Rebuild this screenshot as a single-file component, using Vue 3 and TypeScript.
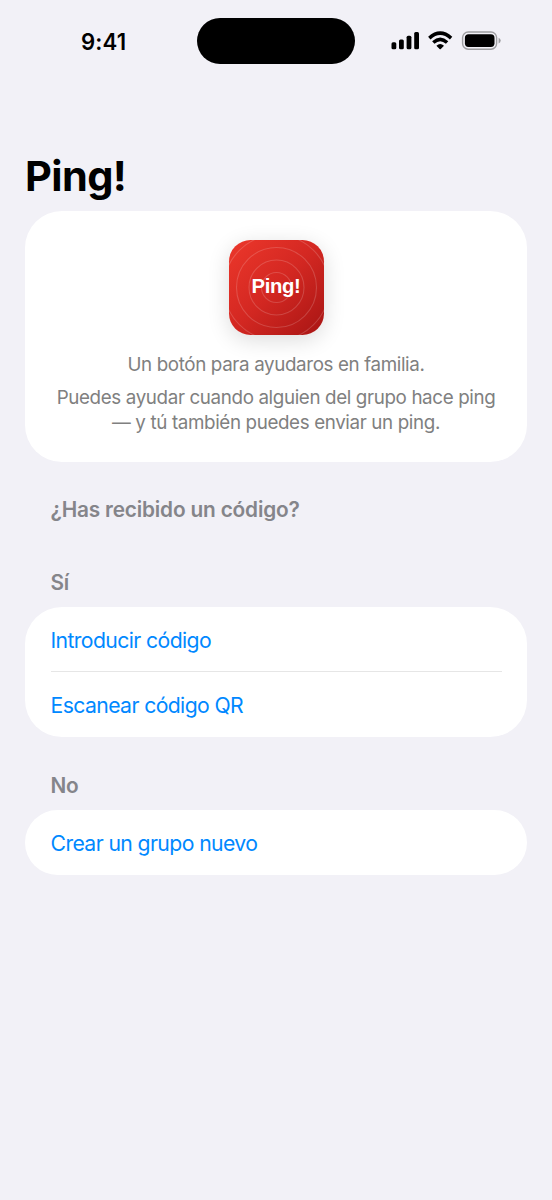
<script setup lang="ts">
interface Section {
  title: string
  actions: string[]
}

const time = '9:41'
const rings: number[] = [15, 27.5, 40, 52.5]
const sections: Section[] = [
  { title: 'Sí', actions: ['Introducir código', 'Escanear código QR'] },
  { title: 'No', actions: ['Crear un grupo nuevo'] },
]
</script>

<template>
  <div class="screen">
    <header class="status">
      <span class="time">{{ time }}</span>
      <div class="island"></div>
      <svg class="indicators" width="112" height="22" viewBox="0 0 112 22">
        <rect x="1.5" y="12.3" width="4.8" height="6.9" rx="1.5" />
        <rect x="9" y="9.4" width="4.8" height="9.8" rx="1.5" />
        <rect x="16.6" y="5.7" width="4.8" height="13.5" rx="1.5" />
        <rect x="24.2" y="2" width="4.8" height="17.2" rx="1.5" />
        <g fill="none" stroke="#000" stroke-width="3.5">
          <path d="M39.3 8.1 Q50.2 -1.7 61.1 8.1" />
          <path d="M43.3 12.5 Q50.2 6.3 57.1 12.5" />
        </g>
        <path d="M46.4 15.8 Q50.2 12.1 54 15.8 L50.8 18.9 Q50.2 19.5 49.6 18.9 Z" />
        <rect x="72.6" y="2" width="34" height="17.2" rx="5.6" fill="none" stroke="#9d9da0" stroke-width="1.4" />
        <rect x="74.9" y="4.3" width="29.6" height="12.6" rx="3.6" />
        <path d="M108.6 7.8 Q110.7 8.7 110.7 10.6 Q110.7 12.5 108.6 13.4 Z" fill="#9d9da0" />
      </svg>
    </header>

    <main>
      <h1>Ping!</h1>
      <section class="card intro">
        <div class="logo">
          <svg class="rings" width="95" height="95" viewBox="0 0 95 95">
            <circle v-for="r in rings" :key="r" cx="47.5" cy="47.5" :r="r" />
          </svg>
          <span class="wordmark">Ping!</span>
        </div>
        <p class="lead">Un botón para ayudaros en familia.</p>
        <p class="detail">Puedes ayudar cuando alguien del grupo hace ping<br />— y tú también puedes enviar un ping.</p>
      </section>

      <h2 class="question">¿Has recibido un código?</h2>

      <section v-for="section in sections" :key="section.title" class="group">
        <h2>{{ section.title }}</h2>
        <div class="card">
          <button v-for="action in section.actions" :key="action" type="button">
            <span>{{ action }}</span>
          </button>
        </div>
      </section>
    </main>
  </div>
</template>

<style>
body {
  background: #f2f1f7;
}
</style>

<style scoped>
.screen {
  box-sizing: border-box;
  width: 552px;
  height: 1200px;
  overflow: hidden;
  background: #f2f1f7;
  font-family: Inter, "Liberation Sans", sans-serif;
  color: #000;
}

.status {
  display: flex;
  align-items: center;
  height: 46px;
  padding: 18px 50px 0 81px;
}

.time {
  width: 116px;
  font-size: 22.2px;
  font-weight: 600;
  line-height: 47px;
  letter-spacing: 0.15px;
}

.island {
  width: 158px;
  height: 46px;
  border-radius: 23px;
  background: #000;
}

.indicators {
  margin-left: 35px;
  flex: none;
}

main {
  padding: 89px 25px 0;
}

h1 {
  margin: 0;
  height: 58px;
  font-size: 41.5px;
  font-weight: 700;
  line-height: 46px;
  letter-spacing: -0.6px;
}

.card {
  overflow: hidden;
  border-radius: 37px;
  background: #fff;
}

.intro {
  box-sizing: border-box;
  height: 250.5px;
  padding-top: 29px;
  text-align: center;
  color: #808080;
  font-size: 18.8px;
  letter-spacing: -0.37px;
}

.logo {
  display: grid;
  place-items: center;
  width: 95px;
  height: 95px;
  margin: 0 auto;
  border-radius: 21.5px;
  background: linear-gradient(135deg, #ec372b 0%, #d42822 48%, #a81514 100%);
  box-shadow: 0 5px 22px rgba(0, 0, 0, 0.14);
}

.rings,
.wordmark {
  grid-area: 1 / 1;
}

.rings {
  border-radius: 21.5px;
  fill: none;
  stroke: rgba(255, 255, 255, 0.17);
  stroke-width: 1.1;
}

.wordmark {
  padding-bottom: 4px;
  color: #fff;
  font-family: "Liberation Sans", Arial, sans-serif;
  font-size: 20.3px;
  font-weight: 700;
  line-height: 24px;
}

p {
  margin: 0;
  line-height: 25px;
  white-space: nowrap;
}

.lead {
  margin-top: 17px;
}

.detail {
  margin-top: 8px;
}

h2 {
  margin: 0;
  padding-left: 25.5px;
  font-size: 20.8px;
  font-weight: 600;
  line-height: 26px;
  letter-spacing: -0.17px;
  color: #85858a;
}

.question {
  margin-top: 35.5px;
}

.group {
  margin-top: 36px;
}

.question + .group {
  margin-top: 47px;
}

.group .card {
  margin-top: 11px;
}

button {
  display: block;
  position: relative;
  width: 100%;
  height: 65px;
  padding: 2px 25.5px 0;
  border: 0;
  background: none;
  color: #0088ff;
  font: 400 21.2px/63px Inter, "Liberation Sans", sans-serif;
  letter-spacing: -0.6px;
  text-align: left;
}

button + button::before {
  content: "";
  position: absolute;
  top: -1px;
  left: 26px;
  right: 25px;
  height: 1.4px;
  background: #e6e6e6;
}
</style>
